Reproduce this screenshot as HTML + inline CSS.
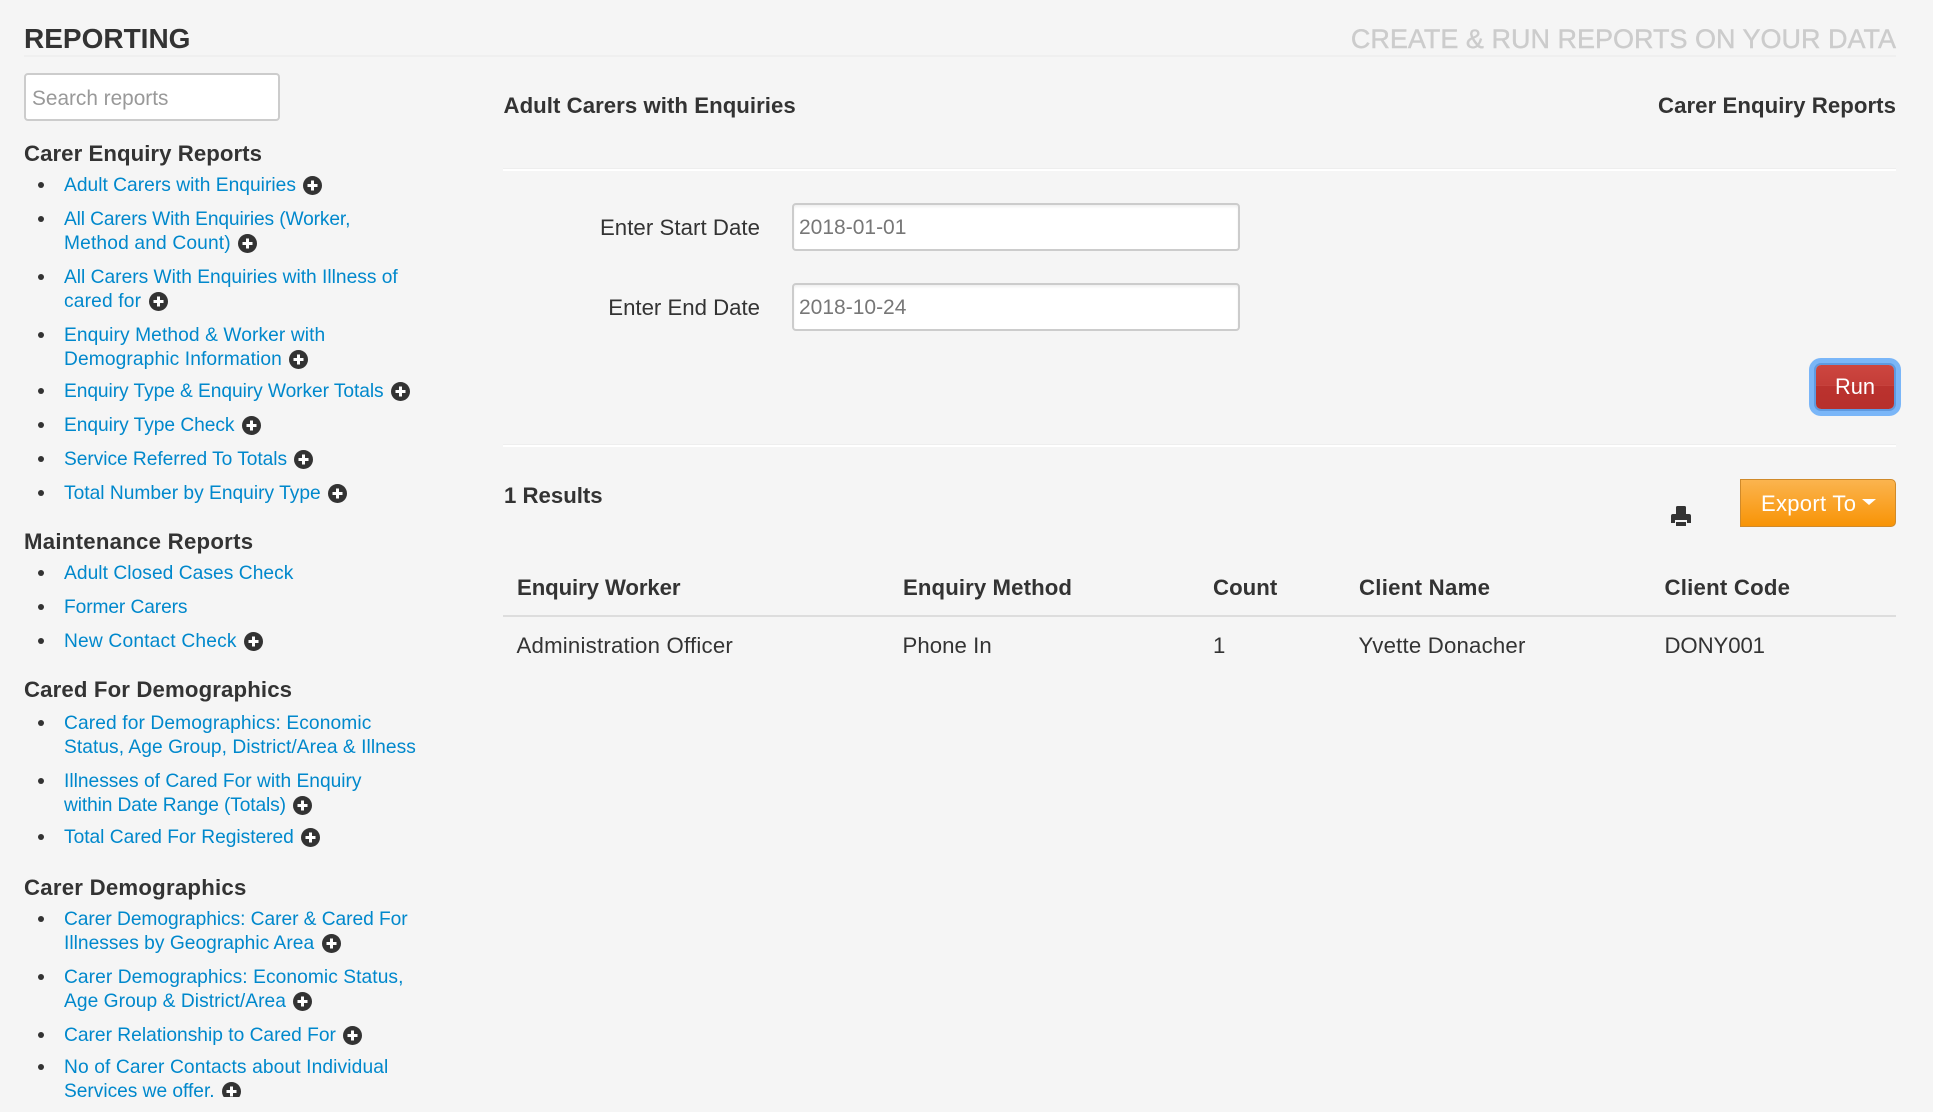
<!DOCTYPE html>
<html><head><meta charset="utf-8"><title>Reporting</title>
<style>
html,body{margin:0;padding:0;width:1933px;height:1112px;overflow:hidden;background:#f5f5f5;font-family:"Liberation Sans",Arial,sans-serif;color:#333}
.a{position:absolute;white-space:nowrap;line-height:24px}
#side{position:absolute;left:0;top:0;width:480px;height:1097px;overflow:hidden}
.h{left:24px;font-size:22.2px;font-weight:bold;color:#333;margin-top:1px}
.l{left:64px;font-size:19.2px;color:#0088cc;margin-top:2px}
.b{position:absolute;left:38px;width:6px;height:6px;border-radius:50%;background:#333;margin-top:1px}
.i{width:19px;height:19px;vertical-align:-3.7px;margin-left:2px}
.t{font-size:22.2px}
.th{font-size:22.2px;font-weight:bold}
.rule{position:absolute;left:503px;width:1393px;height:3px;background:#fff;border-top:1px solid #eee;box-sizing:border-box}
.inp{position:absolute;left:792px;width:448px;height:48px;box-sizing:border-box;background:#fff;border:2px solid #ccc;border-radius:4px;box-shadow:inset 0 2px 2px rgba(0,0,0,.06);font-size:21px;line-height:45px;padding-left:5px;color:#777}
</style></head><body>
<svg width="0" height="0" style="position:absolute"><defs><symbol id="p" viewBox="0 0 19 19"><circle cx="9.5" cy="9.5" r="9.5" fill="#333"/><path d="M8 4.500h3V8h3.500v3H11v3.500H8V11H4.500V8H8z" fill="#fff"/></symbol></defs></svg>

<div class="a" style="left:24px;top:26px;line-height:26px;font-size:28px;font-weight:bold;color:#333">REPORTING</div>
<div class="a" style="right:37px;top:26px;line-height:26px;font-size:27px;color:#ccc;-webkit-text-stroke:.4px #ccc">CREATE &amp; RUN REPORTS ON YOUR DATA</div>
<div style="position:absolute;left:24px;top:55px;width:1872px;height:2px;background:#efefef"></div>

<div id="side">
<div style="position:absolute;left:24px;top:73px;width:256px;height:48px;box-sizing:border-box;background:#fff;border:2px solid #ccc;border-radius:4px"></div>
<div class="a" style="left:32px;top:86.500px;font-size:20.800px;color:#999">Search reports</div>

<div class="a h" style="top:141px;letter-spacing:.06px">Carer Enquiry Reports</div>
<i class="b" style="top:181px"></i><div class="a l" style="top:172px;letter-spacing:.02px">Adult Carers with Enquiries <svg class="i"><use href="#p"/></svg></div>
<i class="b" style="top:215px"></i><div class="a l" style="top:206px;letter-spacing:-.13px">All Carers With Enquiries (Worker,</div>
<div class="a l" style="top:230px;letter-spacing:.15px">Method and Count) <svg class="i"><use href="#p"/></svg></div>
<i class="b" style="top:273px"></i><div class="a l" style="top:264px">All Carers With Enquiries with Illness of</div>
<div class="a l" style="top:288px;letter-spacing:.16px">cared for <svg class="i"><use href="#p"/></svg></div>
<i class="b" style="top:331px"></i><div class="a l" style="top:322px;letter-spacing:.09px">Enquiry Method &amp; Worker with</div>
<div class="a l" style="top:346px;letter-spacing:.11px">Demographic Information <svg class="i"><use href="#p"/></svg></div>
<i class="b" style="top:387px"></i><div class="a l" style="top:378px;letter-spacing:-.07px">Enquiry Type &amp; Enquiry Worker Totals <svg class="i"><use href="#p"/></svg></div>
<i class="b" style="top:421px"></i><div class="a l" style="top:412px;letter-spacing:-.05px">Enquiry Type Check <svg class="i"><use href="#p"/></svg></div>
<i class="b" style="top:455px"></i><div class="a l" style="top:446px;letter-spacing:-.05px">Service Referred To Totals <svg class="i"><use href="#p"/></svg></div>
<i class="b" style="top:489px"></i><div class="a l" style="top:480px">Total Number by Enquiry Type <svg class="i"><use href="#p"/></svg></div>

<div class="a h" style="top:529px;letter-spacing:.26px">Maintenance Reports</div>
<i class="b" style="top:569px"></i><div class="a l" style="top:560px;letter-spacing:.05px">Adult Closed Cases Check</div>
<i class="b" style="top:603px"></i><div class="a l" style="top:594px;letter-spacing:-.1px">Former Carers</div>
<i class="b" style="top:637px"></i><div class="a l" style="top:628px;letter-spacing:.18px">New Contact Check <svg class="i"><use href="#p"/></svg></div>

<div class="a h" style="top:677px;letter-spacing:.14px">Cared For Demographics</div>
<i class="b" style="top:719px"></i><div class="a l" style="top:710px;letter-spacing:.11px">Cared for Demographics: Economic</div>
<div class="a l" style="top:734px;letter-spacing:.05px">Status, Age Group, District/Area &amp; Illness</div>
<i class="b" style="top:777px"></i><div class="a l" style="top:768px">Illnesses of Cared For with Enquiry</div>
<div class="a l" style="top:792px;letter-spacing:-.12px">within Date Range (Totals) <svg class="i"><use href="#p"/></svg></div>
<i class="b" style="top:833px"></i><div class="a l" style="top:824px;letter-spacing:-.02px">Total Cared For Registered <svg class="i"><use href="#p"/></svg></div>

<div class="a h" style="top:875px;letter-spacing:.24px">Carer Demographics</div>
<i class="b" style="top:915px"></i><div class="a l" style="top:906px;letter-spacing:-.05px">Carer Demographics: Carer &amp; Cared For</div>
<div class="a l" style="top:930px;letter-spacing:.02px">Illnesses by Geographic Area <svg class="i"><use href="#p"/></svg></div>
<i class="b" style="top:973px"></i><div class="a l" style="top:964px;letter-spacing:.07px">Carer Demographics: Economic Status,</div>
<div class="a l" style="top:988px;letter-spacing:.05px">Age Group &amp; District/Area <svg class="i"><use href="#p"/></svg></div>
<i class="b" style="top:1031px"></i><div class="a l" style="top:1022px">Carer Relationship to Cared For <svg class="i"><use href="#p"/></svg></div>
<i class="b" style="top:1063px"></i><div class="a l" style="top:1054px;letter-spacing:.12px">No of Carer Contacts about Individual</div>
<div class="a l" style="top:1078px;letter-spacing:-.03px">Services we offer. <svg class="i"><use href="#p"/></svg></div>
</div>

<div class="a th" style="left:503.500px;top:94px;letter-spacing:.05px">Adult Carers with Enquiries</div>
<div class="a th" style="right:37px;top:94px;letter-spacing:.06px">Carer Enquiry Reports</div>
<div class="rule" style="top:168px"></div>

<div class="a t" style="right:1173px;top:216px;letter-spacing:.06px">Enter Start Date</div>
<div class="inp" style="top:203px">2018-01-01</div>
<div class="a t" style="right:1173px;top:296px">Enter End Date</div>
<div class="inp" style="top:283px">2018-10-24</div>

<div style="position:absolute;left:1816px;top:365px;width:78px;height:44px;border-radius:5px;background:linear-gradient(#cd4640 0,#c43d38 45%,#d2514c 45%,#d2514c 47%,#bb322e 47%,#b7302c 100%);box-shadow:0 0 0 2px #5f9ae0,0 0 0 7px #7ab6f8"></div>
<div class="a" style="left:1835px;top:375px;font-size:21.8px;color:#fff">Run</div>
<div class="rule" style="top:444px"></div>

<div class="a th" style="left:504px;top:484px">1 Results</div>
<svg style="position:absolute;left:1671px;top:506px" width="20" height="20" viewBox="0 0 20 20"><path fill="#333" d="M5 1.500Q5 0 6.500 0h7Q15 0 15 1.500V8H5zM0 10Q0 8 2 8h16q2 0 2 2v7h-4v-3H4v3H0zM5 16h10v4H5z"/></svg>
<div style="position:absolute;left:1740px;top:479px;width:156px;height:48px;box-sizing:border-box;border:1px solid #d08a2a;border-radius:0 5px 5px 0;background:linear-gradient(#fbb44f,#f89406)"></div>
<div class="a" style="left:1761px;top:492px;font-size:22px;letter-spacing:.3px;color:#fff">Export To</div>
<div style="position:absolute;left:1862px;top:499px;width:0;height:0;border-left:7px solid transparent;border-right:7px solid transparent;border-top:6px solid #fff"></div>

<div class="a th" style="left:517px;top:575.500px;letter-spacing:-.1px">Enquiry Worker</div>
<div class="a th" style="left:903px;top:575.500px;letter-spacing:.1px">Enquiry Method</div>
<div class="a th" style="left:1213px;top:575.500px;letter-spacing:.05px">Count</div>
<div class="a th" style="left:1359px;top:575.500px;letter-spacing:.27px">Client Name</div>
<div class="a th" style="left:1664.500px;top:575.500px;letter-spacing:.22px">Client Code</div>
<div style="position:absolute;left:503px;top:615px;width:1393px;height:2px;background:#ddd"></div>
<div class="a t" style="left:516.500px;top:633.500px;letter-spacing:.22px">Administration Officer</div>
<div class="a t" style="left:902.500px;top:633.500px;letter-spacing:.05px">Phone In</div>
<div class="a t" style="left:1213px;top:633.500px">1</div>
<div class="a t" style="left:1358.500px;top:633.500px;letter-spacing:.2px">Yvette Donacher</div>
<div class="a t" style="left:1664.500px;top:633.500px;letter-spacing:-.1px">DONY001</div>
</body></html>
